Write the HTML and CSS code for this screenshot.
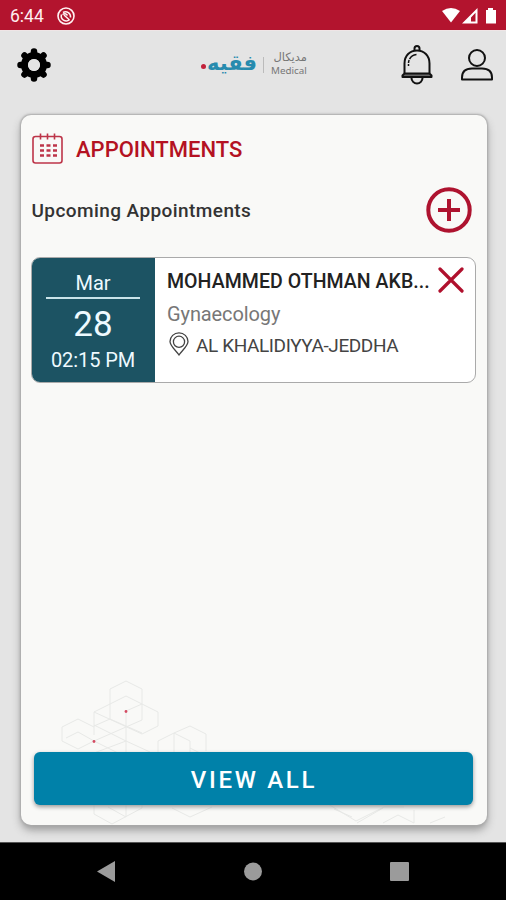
FILE: index.html
```html
<!DOCTYPE html>
<html lang="en">
<head>
<meta charset="utf-8">
<title>Appointments</title>
<link rel="stylesheet" href="styles.css">
</head>
<body>
<div class="screen">
  <div class="status">
    <span class="clock">6:44</span>
    <svg class="status-app" width="18" height="18" viewBox="0 0 18 18" fill="none" stroke="#fff3f3">
      <circle cx="9" cy="9" r="8" stroke-width="1.6"/>
      <path d="M12.500 12.800A5 5 0 0 1 4.500 7.500M6 5.500A5 5 0 0 1 13.500 10.500M5.500 7.500q3-2 5 1M7 8l5.500 5" stroke-width="1.500"/>
    </svg>
    <svg class="status-system" width="56" height="18" viewBox="0 0 56 18" fill="#fff">
      <path d="M0 4Q9-2 18 4L9 15.500z"/>
      <path fill-rule="evenodd" d="M35.500 1v15.500H20zM33.500 5.800L29 10.500V14.500h4.500z"/>
      <path d="M46 1h5v2h3v13.500H44V3h2z"/>
    </svg>
  </div>
  <header class="header">
    <svg class="gear" width="34" height="34" viewBox="-17 -17 34 34">
      <path d="M0-13.500V-10M0 10v3.500M-13.500 0h3.500M10 0h3.500M-9.500-9.500l2 2M9.500 9.500l-2-2M9.500-9.500l-2 2M-9.500 9.500l2-2" stroke="#000" stroke-width="6.500" stroke-linecap="round"/>
      <circle r="9.500" fill="none" stroke="#000" stroke-width="7"/>
      <circle r="6" fill="#e4e4e4"/>
    </svg>
    <div class="logo">
      <i class="logo-dot"></i>
      <span class="logo-name" lang="ar" dir="rtl">فقيه</span>
      <i class="logo-rule"></i>
      <span class="logo-sub"><span lang="ar" dir="rtl">مديكال</span><span>Medical</span></span>
    </div>
    <svg class="bell" width="32" height="40" viewBox="0 0 32 40" fill="none" stroke="#111" stroke-width="2" stroke-linejoin="round">
      <path d="M13.500 5.500V3.500a2.500 2.500 0 0 1 5 0v2"/>
      <path d="M3.500 28V18.500C3.500 10.500 9 5.500 16 5.500S28.500 10.500 28.500 18.500V28"/>
      <path d="M3.500 28.500h25l2 2v1.500h-29v-1.500z" fill="#666"/>
      <path d="M10.500 33a5.500 5.500 0 0 0 11 0"/>
      <path d="M7.500 21v-2.500c0-5 3.500-8.500 8-9" stroke-width="1.500" stroke-dasharray="2 1 3 1 20 0"/>
    </svg>
    <svg class="user" width="32" height="32" viewBox="0 0 32 32" fill="none" stroke="#111" stroke-width="2" stroke-linejoin="round">
      <circle cx="16" cy="9" r="8"/>
      <path d="M1 30.500v-2c0-6 4-9 10-9h10c6 0 10 3 10 9v2z"/>
    </svg>
  </header>
  <main class="main">
    <section class="card">
      <svg class="pattern" viewBox="21 115 466 710" fill="none" stroke="#e8e9e7" stroke-width="1">
        <path d="M110 719V689l16-8 16 8v31l-16 7-32 14-16 8-16-8v-14l16-8 16 8M94 735v-23l32-16 32 16v14l-16 8-48-22M94 725l32 16M110 719l32 14M110 719l-16 7M126 711v42M126 711l16-7M126 741l-32 12M126 741l24 11M66 738l12-6 16 9 24 12"/>
        <path d="M158 754v-13l16-8 16 8v12M174 733v20M174 733l16-7 16 8v17M190 748l10 5"/>
        <path d="M94 805v9l18 10 30-16v-4M126 803v14M108 807l18 10M172 808l18 9 22-10M328 804l28 17 28-14h20M352 817l-18-8M357 823l26-15M383 823l15-8 16 8M414 823v-13M430 823l15-6"/>
        <g fill="#d44b62" stroke="none"><circle cx="126" cy="711.500" r="1.400"/><circle cx="94" cy="741.500" r="1.400"/></g>
      </svg>
      <div class="title-row">
        <svg width="32" height="32" viewBox="0 0 32 32" fill="none" stroke="#bd3549" stroke-width="1.600">
          <rect x="2" y="3.500" width="29" height="26.500" rx="2.500"/>
          <path d="M9.500 0.500v6M16.500 0.500v6M23.500 0.500v6"/>
          <path d="M9 12.500h17M9 17.500h17M9 22.500h17" stroke-width="2.600" stroke-dasharray="4 2.500"/>
        </svg>
        <h1>APPOINTMENTS</h1>
      </div>
      <div class="upcoming">
        <h2>Upcoming Appointments</h2>
        <svg width="46" height="46" viewBox="0 0 46 46" fill="none" stroke="#ae132f" stroke-width="4">
          <circle cx="23" cy="23" r="20.700"/>
          <path d="M12 23h22M23 12v22"/>
        </svg>
      </div>
      <article class="appointment">
        <div class="date">
          <span class="month">Mar</span>
          <span class="day">28</span>
          <span class="time">02:15 PM</span>
        </div>
        <div class="details">
          <div class="doctor-row">
            <span class="doctor">MOHAMMED OTHMAN AKB...</span>
            <svg width="26" height="26" viewBox="0 0 26 26" fill="none" stroke="#b0102d" stroke-width="3.200" stroke-linecap="round"><path d="M2 2l22 22M24 2L2 24"/></svg>
          </div>
          <span class="specialty">Gynaecology</span>
          <div class="place">
            <svg width="20" height="24" viewBox="0 0 20 24" fill="none" stroke="#444" stroke-width="1.300">
              <path d="M10 23C7 18.500 1 14 1 9.500a9 8.700 0 0 1 18 0C19 14 13 18.500 10 23z"/>
              <circle cx="10" cy="9.800" r="5.600"/>
            </svg>
            <span>AL KHALIDIYYA-JEDDHA</span>
          </div>
        </div>
      </article>
      <button class="view-all">VIEW ALL</button>
    </section>
  </main>
  <nav class="nav">
    <svg width="18" height="21" viewBox="0 0 18 21"><path d="M0 10.500L18 0v21z" fill="#9b9b9b"/></svg>
    <svg width="18" height="19" viewBox="0 0 18 19"><circle cx="9" cy="9.500" r="9" fill="#9b9b9b"/></svg>
    <svg width="19" height="19" viewBox="0 0 19 19"><rect width="19" height="19" rx="1" fill="#9b9b9b"/></svg>
  </nav>
</div>
</body>
</html>
```
FILE: styles.css
```css
* { box-sizing: border-box; }
body { margin: 0; font-family: Roboto, "Liberation Sans", sans-serif; background: #e4e4e4; }
svg { display: block; flex: none; }
h1, h2 { margin: 0; }
.screen { width: 506px; height: 900px; display: flex; flex-direction: column; overflow: hidden; }
.status { height: 30px; flex: none; background: #b3142e; display: flex; align-items: center; padding: 2px 7px 0 10px; }
.clock { color: #ffeff0; font-size: 17.5px; line-height: 20px; width: 47px; }
.status-system { margin-left: auto; margin-right: 1px; }
.header { height: 68px; flex: none; display: flex; padding: 0 13px 0 17px; align-items: center; border-top: 1px solid #efe5e6; }
.logo { display: flex; align-items: center; margin-left: 150px; height: 34px; width: 108px; }
.logo-dot { width: 5px; height: 5px; border-radius: 50%; background: #c2213a; margin-top: 4px; flex: none; }
.logo-name { width: 52px; margin-left: 0; font: bold 21px/30px "DejaVu Sans", sans-serif; color: #278bae; text-align: center; position: relative; top: -2px; }
.logo-rule { width: 1px; height: 16px; background: #bbb; margin: 0 7px 0 5px; flex: none; }
.logo-sub { display: flex; flex-direction: column; width: 36px; color: #777; white-space: nowrap; margin-top: -2px; }
.logo-sub span:first-child { font: 11.5px/13px "DejaVu Sans", sans-serif; }
.logo-sub span:last-child { font: 9.8px/13px "Noto Sans", sans-serif; }
.bell { margin-left: auto; }
.user { margin-left: 28px; }
.main { flex: 1; padding: 17px 19px 17px 21px; }
.card { position: relative; height: 710px; border-radius: 10px; background: #f9f9f7; padding: 18px 11px 20px 10px; display: flex; flex-direction: column; box-shadow: 0 0 2px 1px #aaa, 0 5px 9px #999; }
.pattern { position: absolute; inset: 0; width: 466px; height: 710px; }
.title-row, .upcoming, .appointment, .view-all { position: relative; }
.title-row { display: flex; gap: 13px; height: 32px; align-items: center; }
h1 { font-size: 22px; line-height: 28px; font-weight: 500; color: #b41222; padding-top: 2px; }
.upcoming { height: 46px; margin: 22px 4px 0 0; display: flex; align-items: center; justify-content: space-between; }
h2 { font-size: 19px; line-height: 24px; font-weight: 500; color: #333; padding-top: 1px; padding-left: 0.5px; letter-spacing: 0.42px; }
.appointment { height: 126px; margin-top: 24px; display: flex; background: #fff; border: 1px solid #aaa; border-radius: 9px; overflow: hidden; }
.date { width: 123px; flex: none; background: #1c5363; color: #eefaff; display: flex; flex-direction: column; align-items: center; padding-right: 1px; }
.month { font-size: 20px; line-height: 24px; width: 94px; text-align: center; padding-top: 13px; height: 41px; border-bottom: 2px solid #c9e3e9; }
.day { font-size: 35px; line-height: 40px; margin-top: 6px; }
.time { font-size: 20px; line-height: 24px; margin-top: 3px; letter-spacing: -0.1px; }
.details { flex: 1; padding: 9px 11px 0 12px; display: flex; flex-direction: column; }
.doctor-row { display: flex; justify-content: space-between; height: 26px; align-items: center; }
.doctor { font-size: 19.5px; font-weight: 500; color: #222; white-space: nowrap; padding-top: 3px; letter-spacing: 0.06px; }
.specialty { font-size: 20px; line-height: 24px; color: #777; margin-top: 9px; letter-spacing: -0.1px; }
.place { display: flex; align-items: center; gap: 7px; height: 24px; margin: 6px 0 0 2px; font-size: 19px; letter-spacing: -0.4px; color: #444; white-space: nowrap; }
.place span { padding-top: 3px; }
.view-all { margin: auto 0 0 3px; width: 439px; height: 53px; flex: none; border: 0; border-radius: 6px; background: #0081a9; color: #fff; font: 500 24px Roboto, sans-serif; letter-spacing: 2.7px; box-shadow: 0 2px 4px #999; padding: 2px 0 0 1px; }
.nav { height: 58px; flex: none; background: #000; border-top: 1px solid #555; display: flex; justify-content: space-between; align-items: center; padding: 0 97px; }
```
